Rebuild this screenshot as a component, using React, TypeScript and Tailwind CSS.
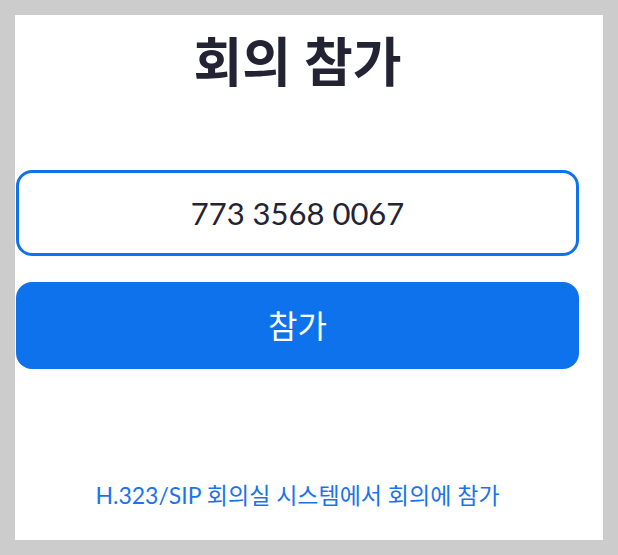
import React from 'react';

const font = { fontFamily: 'Lato, "Noto Sans CJK KR", sans-serif' };

const App = () => {
  return (
    <div className="w-full min-h-[555px] bg-[#cccccc] p-[15px]" style={font}>
      <div className="h-[525px] bg-white">
        <div className="ml-px w-[563px] flex flex-col items-center">
          {/* Title */}
          <h1 className="mt-[17px] text-[53px] leading-[60px] font-bold text-[#232333]">회의 참가</h1>

          {/* Meeting ID */}
          <input
            className="mt-[78px] w-full h-[86px] rounded-[16px] border-[3px] border-[#0e72ed] bg-white text-center text-[31px] text-[#232333] outline-none"
            defaultValue="773 3568 0067"
          />

          {/* Join */}
          <button className="mt-[26px] w-full h-[87px] rounded-[16px] bg-[#0e72ed] text-white text-[32px]">
            참가
          </button>

          {/* H.323 link */}
          <a href="#" className="mt-[112px] text-[23px] leading-[28px] text-[#1a73ee]">
            H.323/SIP 회의실 시스템에서 회의에 참가
          </a>
        </div>
      </div>
    </div>
  );
};

export default App;
